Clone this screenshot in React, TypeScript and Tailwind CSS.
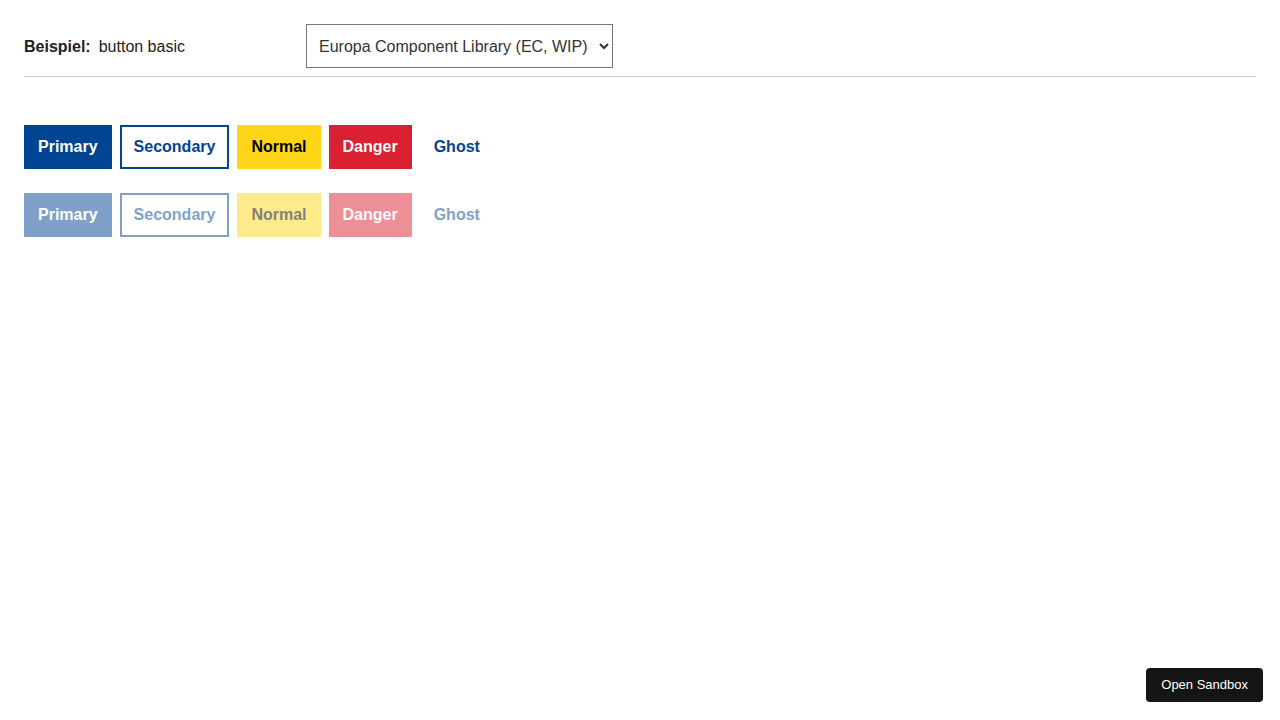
import { useState } from 'react';

const variants = [
  { label: 'Primary', cls: 'bg-[#004494] border-[#004494] text-white' },
  { label: 'Secondary', cls: 'bg-white border-[#004494] text-[#004494]' },
  { label: 'Normal', cls: 'bg-[#ffd617] border-[#ffd617] text-black' },
  { label: 'Danger', cls: 'bg-[#da2131] border-[#da2131] text-white' },
  { label: 'Ghost', cls: 'bg-transparent border-transparent text-[#004494]' },
];

const ButtonRow = ({ disabled }: { disabled?: boolean }) => (
  <div className="flex items-center gap-2">
    {variants.map(v => (
      <button
        key={v.label}
        disabled={disabled}
        className={`h-[44px] border-2 px-3 text-base font-bold leading-none ${v.cls} ${disabled ? 'opacity-50' : ''}`}
      >
        {v.label}
      </button>
    ))}
  </div>
);

const App = () => {
  const [lib, setLib] = useState('ec');

  return (
    <div className="min-h-screen bg-white px-6 pt-6 text-[#222] font-['Liberation_Sans',Arial,sans-serif]">
      {/* Header */}
      <div className="flex items-center">
        <div className="w-[282px] pt-[2px] text-base">
          <span className="font-bold">Beispiel:</span>
          <span className="ml-2">button basic</span>
        </div>
        <select
          value={lib}
          onChange={e => setLib(e.target.value)}
          className="h-[44px] w-[307px] border border-[#767676] bg-white pl-2 pr-0 text-base text-[#333]"
        >
          <option value="ec">Europa Component Library (EC, WIP)</option>
          <option value="eu">Europa Component Library (EU, WIP)</option>
        </select>
      </div>
      <hr className="mt-2 border-t border-[#ccc]" />

      {/* Buttons */}
      <div className="mt-12 flex flex-col gap-6">
        <ButtonRow />
        <ButtonRow disabled />
      </div>

      <button className="fixed bottom-[18px] right-[17px] h-[34px] rounded-[4px] bg-[#151515] px-[15px] text-[13px] text-white">
        Open Sandbox
      </button>
    </div>
  );
};

export default App;
